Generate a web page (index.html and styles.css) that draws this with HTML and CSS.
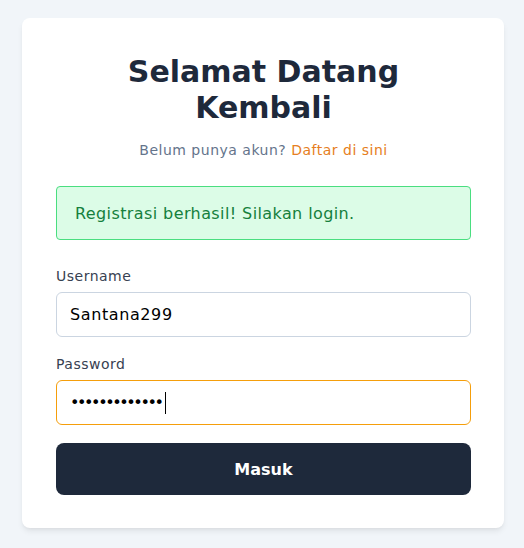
FILE: index.html
```html
<!DOCTYPE html>
<html lang="id">
<head>
<meta charset="utf-8">
<title>Login</title>
<link rel="stylesheet" href="styles.css">
</head>
<body>
<main class="card">
  <h1 class="title">Selamat Datang<br>Kembali</h1>
  <p class="subtitle">Belum punya akun? <a class="link" href="#">Daftar di sini</a></p>
  <div class="alert">Registrasi berhasil! Silakan login.</div>
  <form class="form">
    <div class="group">
      <label class="label">Username</label>
      <div class="field">Santana299</div>
    </div>
    <div class="group">
      <label class="label">Password</label>
      <div class="field focus"><span class="dots">•••••••••••••</span><span class="caret"></span></div>
    </div>
    <button class="btn" type="button">Masuk</button>
  </form>
</main>
</body>
</html>
```
FILE: styles.css
```css
* { box-sizing: border-box; }
html, body { margin: 0; padding: 0; }
body {
  background: #f1f5f9;
  font-family: "DejaVu Sans", "Open Sans", sans-serif;
  padding: 18px 20px 0 22px;
  height: 548px;
}
.card {
  width: 482px;
  background: #fff;
  border-radius: 8px;
  box-shadow: 0 4px 6px -1px rgba(0,0,0,0.08), 0 2px 4px -2px rgba(0,0,0,0.06);
  padding: 36px 33px 33px 34px;
}
.title {
  margin: 0;
  text-align: center;
  font-size: 30px;
  line-height: 36px;
  font-weight: 700;
  color: #1e293b;
}
.subtitle {
  margin: 14px 0 0;
  text-align: center;
  font-size: 14px;
  line-height: 20px;
  color: #64748b;
  letter-spacing: 0.5px;
}
.link { color: #e67e22; text-decoration: none; }
.alert {
  margin-top: 26px;
  height: 54px;
  display: flex;
  align-items: center;
  padding: 0 18px;
  background: #dcfce7;
  border: 1px solid #4ade80;
  border-radius: 4px;
  color: #15803d;
  font-size: 16px;
  letter-spacing: 0.4px;
}
.form { margin: 26px 0 0; display: flex; flex-direction: column; }
.group { display: flex; flex-direction: column; gap: 6px; }
.group + .group { margin-top: 17px; }
.label { font-size: 14px; line-height: 20px; color: #374151; letter-spacing: 0.5px; }
.field {
  height: 45px;
  border: 1px solid #cbd5e1;
  border-radius: 6px;
  padding: 0 13px;
  display: flex;
  align-items: center;
  font-size: 16px;
  color: #000;
  letter-spacing: 0.6px;
}
.field.focus { border-color: #f59e0b; }
.dots { font-size: 16px; letter-spacing: -2.4px; }
.caret { width: 1px; height: 22px; background: #000; margin-left: 3px; }
.btn {
  margin-top: 18px;
  height: 52px;
  border: 0;
  border-radius: 8px;
  background: #1e293b;
  color: #fff;
  font-family: inherit;
  font-size: 16px;
  font-weight: 700;
}
```
